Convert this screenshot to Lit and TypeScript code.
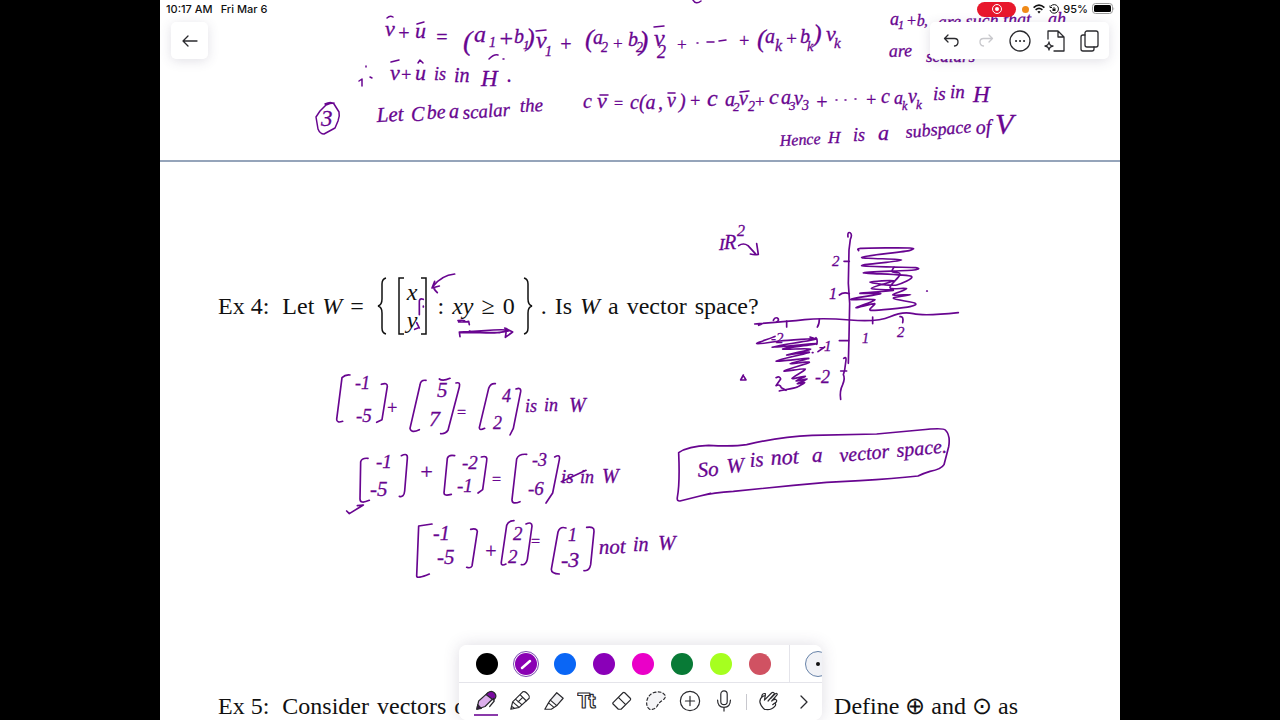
import { LitElement, html, svg, css } from "lit";
import { customElement, state } from "lit/decorators.js";

type Note = [x: number, y: number, size: number, tilt: number, text: string];
type Point = [number, number];

/* Handwritten notes: position, size, tilt of the baseline, words. */
const NOTES: Note[] = [
  [385, 36, 22, 0, "v"], [397, 40, 20, 0, "+"], [415, 38, 22, 0, "u"], [435, 44, 20, 0, "="],
  [463, 50, 28, 0, "("], [474, 42, 24, 0, "a"], [489, 47, 14, 0, "1"], [498, 46, 24, 0, "+"],
  [514, 43, 20, 0, "b"], [523, 49, 13, 0, "1"], [526, 46, 26, 0, ")"], [536, 48, 24, 0, "v"],
  [545, 56, 14, 0, "1"], [559, 51, 20, 0, "+"], [585, 47, 26, 0, "("], [593, 44, 20, 0, "a"],
  [601, 52, 14, 0, "2"], [612, 49, 17, 0, "+"], [628, 46, 20, 0, "b"], [636, 52, 14, 0, "2"],
  [639, 50, 28, 0, ")"], [654, 46, 24, 0, "v"], [657, 58, 18, 0, "2"], [676, 50, 17, 0, "+"],
  [738, 47, 18, 0, "+"], [757, 47, 26, 0, "("], [765, 43, 20, 0, "a"], [775, 51, 16, 0, "k"],
  [785, 45, 19, 0, "+"], [800, 43, 20, 0, "b"], [807, 51, 14, 0, "k"], [813, 42, 26, 0, ")"],
  [826, 41, 22, 0, "v"], [834, 48, 15, 0, "k"],
  [390, 80, 22, 0, "v"], [400, 81, 18, 0, "+"], [415, 80, 22, 0, "u"], [434, 80, 18, 0, "is"],
  [454, 82, 20, 0, "in"], [481, 86, 23, 0, "H"], [507, 82, 20, 0, "."],
  [321, 126, 23, 0, "3"],
  [377, 122, 21, -3, "Let"], [411, 121, 20, 0, "C"], [427, 119, 20, -3, "be"], [449, 118, 20, 0, "a"],
  [463, 119, 19, -4, "scalar"], [520, 112, 19, -2, "the"],
  [583, 108, 20, 0, "c"], [597, 108, 22, 0, "v"], [613, 109, 16, 0, "="], [630, 109, 20, 0, "c(a"],
  [658, 109, 20, 0, ","], [667, 107, 20, 0, "v"], [679, 108, 20, 0, ")"], [689, 107, 18, 0, "+"],
  [707, 106, 24, 0, "c"], [725, 106, 20, 0, "a"], [733, 111, 13, 0, "2"], [739, 105, 20, 0, "v"],
  [748, 111, 14, 0, "2"], [754, 107, 17, 0, "+"], [769, 104, 22, 0, "c"], [781, 104, 20, 0, "a"],
  [789, 110, 13, 0, "3"], [794, 105, 20, 0, "v"], [802, 110, 14, 0, "3"], [815, 109, 20, 0, "+"],
  [865, 106, 18, 0, "+"], [881, 103, 20, 0, "c"], [894, 104, 18, 0, "a"], [902, 110, 12, 0, "k"],
  [908, 103, 20, 0, "v"], [916, 109, 13, 0, "k"], [933, 100, 19, 0, "is"], [950, 98, 19, 0, "in"],
  [973, 102, 23, 0, "H"],
  [780, 146, 16, -3, "Hence"], [828, 143, 17, 0, "H"], [853, 141, 18, 0, "is"], [878, 140, 22, 0, "a"],
  [906, 138, 18, -5, "subspace"], [976, 134, 20, -3, "of"], [995, 134, 30, 0, "V"],
  [890, 25, 18, 0, "a"], [898, 29, 12, 0, "1"], [906, 26, 16, 0, "+b"], [924, 26, 15, 0, ","],
  [938, 28, 18, -2, "are such that"], [1048, 25, 18, 0, "ah"],
  [889, 57, 18, -2, "are"], [926, 62, 17, 0, "scalars"],
  [719, 250, 17, 0, "I"], [724, 249, 20, 0, "R"], [737, 236, 16, 0, "2"],
  [832, 266, 15, 0, "2"], [829, 299, 16, 0, "1"], [862, 343, 14, 0, "1"], [897, 337, 15, 0, "2"],
  [771, 343, 15, 0, "-2"], [819, 351, 15, 0, "-1"], [815, 383, 18, 0, "-2"],
  [355, 389, 18, 0, "-1"], [356, 422, 19, 0, "-5"], [386, 414, 18, 0, "+"], [437, 397, 21, 0, "5"],
  [429, 426, 22, 0, "7"], [456, 418, 16, 0, "="], [502, 402, 18, 0, "4"], [493, 429, 18, 0, "2"],
  [525, 412, 18, 0, "is"], [544, 411, 18, 0, "in"], [569, 412, 20, 0, "W"],
  [376, 468, 19, 0, "-1"], [370, 496, 21, 0, "-5"], [419, 479, 22, 0, "+"], [462, 469, 19, 0, "-2"],
  [457, 492, 19, 0, "-1"], [491, 485, 16, 0, "="], [532, 466, 18, 0, "-3"], [528, 495, 19, 0, "-6"],
  [561, 483, 19, 0, "is"], [580, 483, 18, 0, "in"], [602, 483, 20, 0, "W"],
  [433, 540, 20, 0, "-1"], [437, 564, 21, 0, "-5"], [484, 558, 20, 0, "+"], [513, 540, 19, 0, "2"],
  [508, 563, 19, 0, "2"], [530, 547, 16, 0, "="], [568, 541, 18, 0, "1"], [561, 567, 22, 0, "-3"],
  [599, 554, 21, -2, "not"], [633, 551, 20, 0, "in"], [658, 550, 21, 0, "W"],
  [698, 477, 21, -4, "So"], [727, 473, 21, -4, "W"], [750, 467, 21, -4, "is"], [771, 465, 22, -3, "not"],
  [812, 462, 21, 0, "a"], [840, 462, 20, -5, "vector"], [897, 457, 20, -5, "space."],
];

/* Loose pen marks, in page units. */
const MARKS = [
  "M693 0q3 5 8 1",
  "M387 18q3-3 6-1", "M417 24l7-2", "M536 31l10-1", "M654 27l10-1", "M391 62l8-2", "M418 63l2-3 3 3",
  "M489 59q5-5 9-4m5 4h1", "M600 95h8", "M668 93h7", "M740 92l9-1",
  "M359 81l3-2v7m4-20v1m4 10l2 1",
  "M697 43h1M707 42h7M719 41l7-1", "M836 100h1M845 100h1M855 99h1",
  "M325 104q6-3 9 0l5 8q1 4-1 9l-3 7-11 6q-4 0-6-5l-2-12 4-6 6-6q4-2 8-2",
];

/* Back-and-forth shading of the first and third quadrants. */
const FIRST: Point[] = [
  [446, 107], [452, 100], [600, 99], [600, 106], [455, 127], [575, 135], [455, 152], [616, 158], [612, 165],
  [460, 173], [604, 184], [560, 210], [480, 202], [552, 197], [484, 220], [550, 226], [450, 235], [512, 236],
  [422, 253], [495, 254], [438, 278], [494, 266], [482, 286], [600, 275], [616, 265], [550, 250], [602, 239],
  [548, 240], [590, 221], [540, 218], [570, 178], [546, 170], [552, 156],
];
const THIRD: Point[] = [
  [195, 364], [140, 386], [210, 378], [320, 372], [186, 396], [320, 386], [218, 402], [302, 402], [230, 420],
  [298, 412], [198, 438], [296, 430], [240, 446], [298, 442], [222, 468], [286, 462], [246, 490], [286, 484],
  [258, 498], [292, 492], [262, 506], [284, 503], [262, 516], [208, 528],
];

/* A flowing stroke that passes through every point. */
const flow = (p: Point[]) =>
  p.slice(1).reduce((d, [x, y], k) => {
    const [ax, ay] = p[k];
    const [bx, by] = p[Math.max(0, k - 1)];
    const [nx, ny] = p[Math.min(p.length - 1, k + 2)];
    return `${d}C${ax + (x - bx) / 10} ${ay + (y - by) / 6} ${x - (nx - ax) / 10} ${y - (ny - ay) / 6} ${x} ${y}`;
  }, `M${p[0][0]} ${p[0][1]}`);

/* Traced at three units to a pixel, each set with its own origin. */
const TRACES: { at: string; paths: string[] }[] = [
  { at: "translate(710 215) scale(.33333)", paths: [
    "M414 66q-2-16 6-13 8 5 1 20l-4 32-2 100 4 60-2 100-2 80",
    "M134 327Q230 320 284 314T420 315T540 305T610 296T745 293M146 331l8-3",
    "M402 139h16M388 240q12-10 30-4M388 377h28M488 306v20M570 305q12-2 8 18M230 318v18M328 312q0 16-6 24M190 316q4-10 12-7 8 6-2 12",
    "M401 430q8-6 7 5l-4 30-4 14q6 10-2 30-10 20-6 44M392 468h18",
    "M86 92q14-10 28 0l22 24M140 86l5 32q-12 2-24-1",
    "M318 368q6 8 2 20M300 366l18 6M344 396l-20 14M307 413h2M100 480l-8 15h16l-6-10",
    "M198 488q12-6 14 4l-14 20q12-6 16 6l14 8M650 228h2",
    flow(FIRST), flow(THIRD),
  ] },
  { at: "translate(320 365) scale(.33333)", paths: [
    "M90 30q-14-2-24 8l-16 125q0 12 18 6M184 58q18-6 18 6l-16 100-16 8",
    "M318 46q-16-2-18 14l-30 130q4 16 28 4M408 54q14-4 10 12l-34 130q-8 12-22 10",
    "M526 56q-14-2-20 14l-28 118q0 10 16 2M588 72q16-6 14 8l-22 110-10 20M358 42q10 8 32-2",
    "M144 280q-18-2-22 10l-2 112q0 16 28 4M244 272q20-10 18 8l-8 98q-2 20-16 16",
    "M404 272q-18-4-22 8l-10 104q0 10 22 4M484 276q20-6 16 12l-12 86-14 10",
    "M620 268q-24-2-30 14l-14 122q0 16 24 6M704 276q18-10 14 8l-20 100-20 30",
    "M80 438l8 8 42-26-18 2M724 350l74-34",
  ] },
  { at: "translate(400 440) scale(.33333)", paths: [
    "M96 252l-40 6-6 150q0 10 38-6M212 268q18-4 20 6l-16 104q-4 8-16 4",
    "M342 242q-16 0-22 14l-16 110q-2 14 14 6M378 252q18-8 18 6l-14 100q-4 18-18 16",
    "M498 264q-18-6-24 12l-20 112q0 14 24 14M560 262q24-4 22 12l-10 100q-4 20-20 18",
  ] },
  { at: "translate(660 420) scale(.33333)", paths: [
    "M56 98Q84 78 146 76Q220 80 260 74Q360 50 456 46L650 42L780 30Q850 22 856 30Q872 46 866 80L852 134Q844 148 810 154Q790 160 774 168Q700 176 600 182Q500 186 400 196L220 214Q160 218 120 228Q80 238 60 243Q50 244 52 232Q60 190 56 98zM120 228l32-8",
  ] },
  { at: "translate(400 260) scale(.33333)", paths: [
    "M164 42Q124 46 98 80M104 64l-8 20 22-6M112 98q-14-14-8-12M70 118q-14-6-12 12v34M70 138v3M58 204l-8-16M54 204l-10 4",
    "M174 182q20-4 22 4l10-2 2 10M176 186h26M180 230l-2-14 42-2 60-4q40-2 48 2-30 8-70 7t-50-6M180 218l120 0M314 204l24 12-22 16 4-26",
  ] },
];

const SWATCHES = [
  ["Black", "#000000"], ["Violet", "#8a00b4"], ["Blue", "#0a66f5"], ["Purple", "#8a00b8"],
  ["Magenta", "#ea00c8"], ["Green", "#087a36"], ["Lime", "#a6ff1f"], ["Coral", "#d05262"],
];

const TOOLS: [string, unknown][] = [
  ["Pen", svg`<path d="M2 21l2-9L13 4q3-3 6 0t1 5l-9 9z" fill="#dcaeec"/><path d="M12 5l2-2q4-3 7 0t1 6l-2 2z" fill="#7a0aa0"/><path d="M2 21l1-5 4 4z" fill="#3a104a"/><path d="M20 9l1 3-5 6"/>`],
  ["Pencil", svg`<path d="M2 21l2-8L15 2q2-1 4 1l2 2q2 2 1 4L11 19zM4 13l7 6M12 5l7 7M7 10l7 6M10 13l5-5M3 18l3 2"/>`],
  ["Highlighter", svg`<path d="M8 11l7-8 7 6-7 8z" fill="#f1f1f4"/><path d="M8 11l-2 3 6 5 3-2M6 14l-4 7h7l3-2"/>`],
  ["Text", svg`<text x="0" y="20" font-family="Inter, sans-serif" font-size="22" font-weight="700" stroke-width="1.300">Tt</text>`],
  ["Eraser", svg`<path d="M2 14L13 3q1-1 2 0l6 6q1 1 0 2L11 21H8l-6-6zM8 8l8 8"/>`],
  ["Lasso", svg`<path d="M9 3q9-3 13 3 1 3-4 6-3 2-5 6-3 4-8 3-4-3-3-9 1-6 7-9z" fill="#f4f4f6" stroke-dasharray="3 2.500"/>`],
  ["Insert", svg`<circle cx="12" cy="12" r="10.500"/><path d="M12 7v10M7 12h10"/>`],
  ["Record audio", svg`<rect x="8.500" y="1" width="7" height="15" rx="3.500"/><path d="M5 11q0 8 7 8t7-8M12 19v4"/>`],
];

const icon = (shape: unknown, size = 24) => html`
  <svg class="icon" width=${size} height=${size} viewBox="0 0 24 24" aria-hidden="true">${shape}</svg>`;

@customElement("app-root")
export class AppRoot extends LitElement {
  @state() private color = 1;
  @state() private tool = 0;

  static styles = css`
    :host { display: block; background: #000; font-family: Inter, "Liberation Sans", sans-serif; color: #111; }
    * { box-sizing: border-box; }
    .stage { position: relative; width: 75%; min-height: 100vh; margin: 0 auto; background: #fff; overflow: hidden; display: flex; flex-direction: column; }
    button { border: 0; padding: 0; margin: 0; background: none; color: inherit; font: inherit; display: grid; place-items: center; cursor: pointer; }
    .icon { display: block; fill: none; stroke: #2a2a2e; stroke-width: 1.3; stroke-linecap: round; stroke-linejoin: round; }
    .top { height: 162px; border-bottom: 2px solid #95a4ba; }
    .status { position: relative; z-index: 2; height: 18px; display: flex; align-items: center; gap: 8px; padding: 0 5px 0 6px; font-size: 11px; font-weight: 500; line-height: 18px; }
    .signals { margin-left: auto; display: flex; align-items: center; gap: 4px; }
    .signals svg { display: block; }
    .rec { width: 39px; height: 15px; border-radius: 8px; background: #e8182c; display: grid; place-items: center; margin-right: 2px; }
    .mic-dot { width: 7px; height: 7px; border-radius: 50%; background: #f08a18; }
    .bars { position: relative; z-index: 2; display: flex; justify-content: space-between; padding: 4px 11px 0; }
    .card { display: flex; align-items: center; height: 37px; border-radius: 5px; background: #fff; box-shadow: 0 2px 12px rgba(70, 60, 100, .16); }
    .back { width: 37px; justify-content: center; }
    .actions { width: 179px; justify-content: space-between; padding: 0 8px 0 9px; }
    .faint .icon { stroke: #c8c8cc; }
    .page { flex: 1; display: flex; flex-direction: column; justify-content: space-between; padding: 115px 58px 0; font-family: "Liberation Serif", serif; font-size: 24px; line-height: 28px; }
    p { margin: 0; display: flex; align-items: center; gap: 8px; white-space: nowrap; }
    .label { margin-right: 5px; }
    .ex5 { justify-content: space-between; padding-right: 44px; }
    .phrase { display: flex; gap: 8px; align-items: center; }
    .tight { gap: 6px; }
    .set { display: flex; align-items: center; gap: 8px; padding-left: 5px; }
    .set svg { display: block; fill: none; stroke: #111; stroke-width: 1.5; }
    .vector { display: flex; align-items: center; gap: 3px; padding: 0 2px; }
    .entries { display: flex; flex-direction: column; line-height: 28px; }
    .ink { position: absolute; inset: 0; width: 100%; pointer-events: none; z-index: 1; }
    .ink text { fill: #680590; stroke: #680590; stroke-width: .3; font-family: "Liberation Serif", serif; font-style: italic; }
    .ink path { fill: none; stroke: #680590; stroke-width: 1.5; stroke-linecap: round; stroke-linejoin: round; }
    .ink .trace path { stroke-width: 5; }
    .dock { position: absolute; z-index: 3; bottom: 0; left: 50%; margin-left: -181px; width: 363px; border-radius: 8px; overflow: hidden; background: #fff; }
    .halo { position: absolute; z-index: 2; bottom: 0; left: 50%; margin-left: -181px; width: 363px; height: 75px; border-radius: 8px; box-shadow: 0 0 16px rgba(70, 60, 100, .18); }
    .colors { height: 38px; display: flex; align-items: center; gap: 13px; padding-left: 15px; border-bottom: 1px solid #e4e4ea; }
    .swatch { flex: none; width: 26px; height: 26px; border-radius: 50%; border: 1px solid transparent; }
    .swatch.on { border-color: #7a4ab0; }
    .fill { width: 22px; height: 22px; border-radius: 50%; display: grid; place-items: center; }
    .split { flex: none; width: 1px; align-self: stretch; margin: 0 2px 0 3px; background: #e4e4ea; }
    .nib { flex: none; width: 26px; height: 26px; border-radius: 50%; border: 1px solid #6682a8; background: #f1f2f6; }
    .nib::after { content: ""; width: 4px; height: 4px; border-radius: 50%; background: #111; }
    .tools { height: 37px; display: flex; align-items: center; gap: 10px; padding: 0 6px 0 15px; }
    .tool { width: 24px; height: 28px; border-bottom: 2px solid transparent; }
    .tool.on { border-color: #8a3aaa; }
    .rule { width: 1px; height: 16px; background: #c8c8ce; }
    .more { margin-left: auto; }
  `;

  private noteView = ([x, y, size, tilt, text]: Note) =>
    svg`<text x=${x} y=${y} font-size=${size} transform=${`rotate(${tilt} ${x} ${y})`}>${text}</text>`;

  render() {
    return html`
      <div class="stage">
        <header class="top">
          <div class="status">
            <span>10:17 AM</span><span>Fri Mar 6</span>
            <div class="signals">
              <span class="rec"><svg width="12" height="12" viewBox="0 0 12 12"><circle cx="6" cy="6" r="4.500" fill="none" stroke="#fff"/><circle cx="6" cy="6" r="2" fill="#fff"/></svg></span>
              <span class="mic-dot"></span>
              <svg width="12" height="10" viewBox="0 0 12 10" fill="none" stroke="#111" stroke-width="1.600"><path d="M.6 3.600q5.400-5 10.800 0M2.600 5.800q3.400-3 6.800 0"/><path d="M6 9.500L4.400 7.700q1.600-1.200 3.200 0z" fill="#111" stroke="none"/></svg>
              <svg width="10" height="10" viewBox="0 0 10 10" fill="none" stroke="#111"><path d="M2 2a4.300 4.300 0 1 1-1 4M1 1.500v2h2"/><rect x="3.500" y="4.500" width="3" height="2.500" fill="#111" stroke="none"/><path d="M4 4.500q1-2.500 2 0" stroke-width=".7"/></svg>
              <span>95%</span>
              <svg width="23" height="12" viewBox="0 0 23 12"><rect x=".5" y=".5" width="20" height="10" rx="3" fill="none" stroke="#999"/><rect x="2" y="2" width="17" height="7" rx="1.500" fill="#000"/><path d="M21.500 4v3.500q1.500-1.700 0-3.500z" fill="#999"/></svg>
            </div>
          </div>
          <div class="bars">
            <button class="card back" aria-label="Back">${icon(svg`<path d="M19 12H5m5-5l-5 5 5 5"/>`)}</button>
            <div class="card actions">
              <button aria-label="Undo">${icon(svg`<path d="M9 6L5.500 9.500 9 13M5.500 9.500h10q3.500 0 3.500 3.500t-3.500 4"/>`)}</button>
              <button class="faint" aria-label="Redo">${icon(svg`<path d="M15 6l3.500 3.500L15 13m3.500-3.500h-9Q6 9.500 6 13t3.500 4"/>`)}</button>
              <button aria-label="More">${icon(svg`<circle cx="12" cy="12" r="10"/><path d="M8 12h.1M12 12h.1M16 12h.1" stroke-width="2"/>`)}</button>
              <button aria-label="Add page">${icon(svg`<path d="M5 10V2h10l6 6v14H11M15 2v6h6M6 13q.5 4 4 4-3.500.5-4 4-.5-3.500-4-4 3.500-.5 4-4z"/>`)}</button>
              <button aria-label="Pages">${icon(svg`<rect x="8" y="2" width="13" height="16" rx="2"/><path d="M8 6H6q-2 0-2 2v12q0 2 2 2h9q2 0 2-2v-2"/>`)}</button>
            </div>
          </div>
        </header>

        <main class="page">
          <p>
            <span class="label">Ex 4:</span><span>Let</span><i>W</i><span>=</span>
            <span class="set">
              <svg width="10" height="58" viewBox="0 0 10 58"><path d="M9 1Q5 2 5 7v15q0 6-4 7 4 1 4 7v15q0 5 4 6"/></svg>
              <span class="vector">
                <svg width="7" height="58" viewBox="0 0 7 58"><path d="M7 1H2v56h5"/></svg>
                <span class="entries"><i>x</i><i>y</i></span>
                <svg width="7" height="58" viewBox="0 0 7 58"><path d="M0 1h5v56H0"/></svg>
              </span>
              <span>:</span><i>xy</i><span>≥</span><span>0</span>
              <svg width="10" height="58" viewBox="0 0 10 58"><path d="M1 1q4 1 4 6v15q0 6 4 7-4 1-4 7v15q0 5-4 6"/></svg>
              <span>.</span>
            </span>
            <span>Is</span><i>W</i><span>a</span><span>vector</span><span>space?</span>
          </p>
          <p class="ex5">
            <span class="phrase"><span class="label">Ex 5:</span><span>Consider</span><span>vectors</span><span>of</span></span>
            <span class="phrase tight"><span>Define</span><span>⊕</span><span>and</span><span>⊙</span><span>as</span></span>
          </p>
        </main>

        <svg class="ink" viewBox="160 0 960 720" aria-label="Handwritten notes">
          ${NOTES.map(this.noteView)}
          ${MARKS.map((d) => svg`<path d=${d}/>`)}
          ${TRACES.map((t) => svg`<g class="trace" transform=${t.at}>${t.paths.map((d) => svg`<path d=${d}/>`)}</g>`)}
        </svg>

        <div class="halo"></div>
        <nav class="dock" aria-label="Drawing tools">
          <div class="colors">
            ${SWATCHES.map(([name, value], i) => html`
              <button class="swatch ${i === this.color ? "on" : ""}" aria-label=${name} @click=${() => (this.color = i)}>
                <span class="fill" style="background:${value}">
                  ${i === this.color ? html`<svg width="12" height="12" viewBox="0 0 12 12"><path d="M2 10l8-7" stroke="#fff" stroke-width="2.500" stroke-linecap="round"/></svg>` : ""}
                </span>
              </button>`)}
            <span class="split"></span>
            <button class="nib" aria-label="Stroke width"></button>
          </div>
          <div class="tools">
            ${TOOLS.map(([name, shape], i) => html`
              <button class="tool ${i === this.tool ? "on" : ""}" aria-label=${name} @click=${() => (this.tool = i)}>${icon(shape, 22)}</button>`)}
            <span class="rule"></span>
            <button class="tool" aria-label="Draw with finger">${icon(svg`<path d="M7 21q-4-3-5-8 0-4 3-6l3-1-1 5 8-8q2-1 3 1l-7 8M14 9l5-5q2-1 2 1l-6 7M16 11l3-1q2 1 1 3l-4 3M17 15q3-1 2 2-5 6-12 4M8 6V4q-3-1-4 3"/>`, 22)}</button>
            <button class="more" aria-label="More tools">${icon(svg`<path d="M9 6l6 6-6 6"/>`)}</button>
          </div>
        </nav>
      </div>`;
  }
}
